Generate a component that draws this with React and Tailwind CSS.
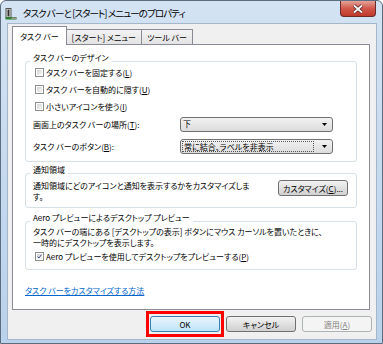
const font = "[font-family:'Noto_Sans_CJK_JP','Noto_Sans',sans-serif] [font-feature-settings:'palt']";

function Checkbox({ checked }) {
  return (
    <div className="w-[9px] h-[9px] border border-[#8e8f8f] bg-white p-[1px] shrink-0">
      <div className="w-full h-full bg-gradient-to-br from-[#d4d4d4] to-[#f7f7f7] flex items-center justify-center">
        {checked && (
          <svg width="7" height="7" viewBox="0 0 7 7">
            <path d="M0.8 3.6 L2.7 5.6 L6.3 0.8" fill="none" stroke="#3b4f86" strokeWidth="1.4" />
          </svg>
        )}
      </div>
    </div>
  );
}

function CheckRow({ children, checked }) {
  return (
    <div className="h-[17px] flex items-center pl-[9px] gap-[2px]">
      <Checkbox checked={checked} />
      <span className="leading-[11px]">{children}</span>
    </div>
  );
}

function Group({ label, className, children }) {
  return (
    <div className={`mx-[12px] border border-[#d5dfe5] rounded-[3px] ${className}`}>
      <div className="-mt-[10px] ml-[4px] h-[12px] leading-[12px] px-[3px] bg-white w-fit">{label}</div>
      {children}
    </div>
  );
}

function Dropdown({ value, focused }) {
  return (
    <div className="w-[153px] h-[15px] border border-[#707070] rounded-[3px] bg-gradient-to-b from-[#f2f2f2] to-[#dcdcdc] flex items-center pl-[1px] pr-[5px]">
      <div className={`flex-1 h-[11px] leading-[10px] pl-[1px] ${focused ? "border border-dotted border-[#555]" : ""}`}>
        {value}
      </div>
      <svg width="5" height="3" viewBox="0 0 5 3" className="ml-[8px]">
        <path d="M0 0 H5 L2.5 3 Z" fill="#000" />
      </svg>
    </div>
  );
}

function Button({ children, variant }) {
  const styles = {
    default: "border-[#3c7fb1] from-[#eaf6fd] to-[#bde4f8] text-black",
    normal: "border-[#707070] from-[#f2f2f2] to-[#d0d0d0] text-black",
    disabled: "border-[#adb2b5] from-[#f4f4f4] to-[#f4f4f4] text-[#838383]",
  };
  return (
    <div className={`w-[70px] h-[16px] border rounded-[3px] bg-gradient-to-b flex items-center justify-center leading-[11px] ${styles[variant]}`}>
      {children}
    </div>
  );
}

export default function App() {
  return (
    <div className={`w-[383px] h-[344px] ${font} text-[8px] text-black flex flex-col border border-[#5d6d80] rounded-t-[6px] bg-gradient-to-b from-[#d3e3f3] to-[#b9d1ea]`}>
      {/* title bar */}
      <div className="h-[22px] flex items-start shrink-0">
        <svg width="12" height="12" viewBox="0 0 12 12" className="ml-[4px] mt-[7px]">
          <rect x="1" y="0.5" width="5" height="9" fill="#e8e8e8" stroke="#555" />
          <rect x="2.5" y="1.5" width="2" height="7" fill="#333" />
          <rect x="0.5" y="9" width="11" height="2.5" fill="#2f7d2f" />
          <rect x="6.5" y="9.5" width="5" height="1.5" fill="#9a9a9a" />
        </svg>
        <div className="ml-[6px] mt-[6px] text-[9.5px] tracking-[-0.9px] leading-[12px] text-black">タスク バーと [スタート] メニューのプロパティ</div>
        <div className="flex-1" />
        <div className="w-[36px] h-[16px] mr-[6px] border border-t-0 border-[#6b2b2b] rounded-b-[4px] bg-gradient-to-b from-[#e4a29a] via-[#d0574a] to-[#c0392b] flex items-center justify-center">
          <svg width="12" height="10" viewBox="0 0 12 10">
            <path d="M2 1.5 L10 8.5 M10 1.5 L2 8.5" stroke="#4a1a1a" strokeWidth="3.2" />
            <path d="M2 1.5 L10 8.5 M10 1.5 L2 8.5" stroke="#ffffff" strokeWidth="1.8" />
          </svg>
        </div>
      </div>

      {/* client area */}
      <div className="flex-1 ml-[6px] mr-[5px] mb-[3px] border border-[#a4b6ca] bg-[#f0f0f0] flex flex-col">
        {/* tabs */}
        <div className="flex items-end h-[21px] pl-[4px] relative z-10 -mb-[1px]">
          <div className="h-[19px] px-[7px] border border-b-0 border-[#898c95] bg-white flex items-center leading-[11px]">タスク バー</div>
          <div className="h-[16px] px-[5px] border border-l-0 border-[#898c95] bg-gradient-to-b from-[#f3f3f3] to-[#e3e3e3] flex items-center leading-[11px]">[スタート] メニュー</div>
          <div className="h-[16px] px-[5px] border border-l-0 border-[#898c95] bg-gradient-to-b from-[#f3f3f3] to-[#e3e3e3] flex items-center leading-[11px]">ツール バー</div>
        </div>

        {/* panel */}
        <div className="ml-[4px] w-[358px] h-[266px] border border-[#898c95] bg-white flex flex-col">
          <Group label="タスク バーのデザイン" className="mt-[16px] pb-[7px]">
            <CheckRow>タスク バーを固定する(<u>L</u>)</CheckRow>
            <CheckRow>タスク バーを自動的に隠す(<u>U</u>)</CheckRow>
            <CheckRow>小さいアイコンを使う(<u>I</u>)</CheckRow>
            <div className="mt-[2px] flex items-center pl-[7px]">
              <span className="w-[147px] leading-[11px]">画面上のタスク バーの場所(<u>T</u>):</span>
              <Dropdown value="下" />
            </div>
            <div className="mt-[7px] flex items-center pl-[7px]">
              <span className="w-[147px] leading-[11px]">タスク バーのボタン(<u>B</u>):</span>
              <Dropdown value="常に結合、ラベルを非表示" focused />
            </div>
          </Group>

          <Group label="通知領域" className="mt-[11px] pb-[5px]">
            <div className="flex items-start pl-[7px] pt-[4px]">
              <div className="w-[245px] leading-[11px] whitespace-nowrap">
                通知領域にどのアイコンと通知を表示するかをカスタマイズしま<br />す。
              </div>
              <Button variant="normal">カスタマイズ(<u>C</u>)...</Button>
            </div>
          </Group>

          <Group label="Aero プレビューによるデスクトップ プレビュー" className="mt-[13px] pb-[4px]">
            <div className="pl-[7px] pt-[2px] leading-[11px] whitespace-nowrap">
              タスク バーの端にある [デスクトップの表示] ボタンにマウス カーソルを置いたときに、<br />一時的にデスクトップを表示します。
            </div>
            <CheckRow checked>Aero プレビューを使用してデスクトップをプレビューする(<u>P</u>)</CheckRow>
          </Group>

          <div className="mt-[15px] ml-[12px] text-[#0066cc] underline leading-[11px]">タスク バーをカスタマイズする方法</div>
        </div>

        {/* buttons */}
        <div className="flex items-center justify-end pr-[4px] mt-[1px] gap-[6px]">
          <div className="border-[3px] border-[#ff0000] px-[1px] py-[2px] -mr-[4px]">
            <Button variant="default">OK</Button>
          </div>
          <Button variant="normal">キャンセル</Button>
          <Button variant="disabled">適用(<u>A</u>)</Button>
        </div>
      </div>
    </div>
  );
}
